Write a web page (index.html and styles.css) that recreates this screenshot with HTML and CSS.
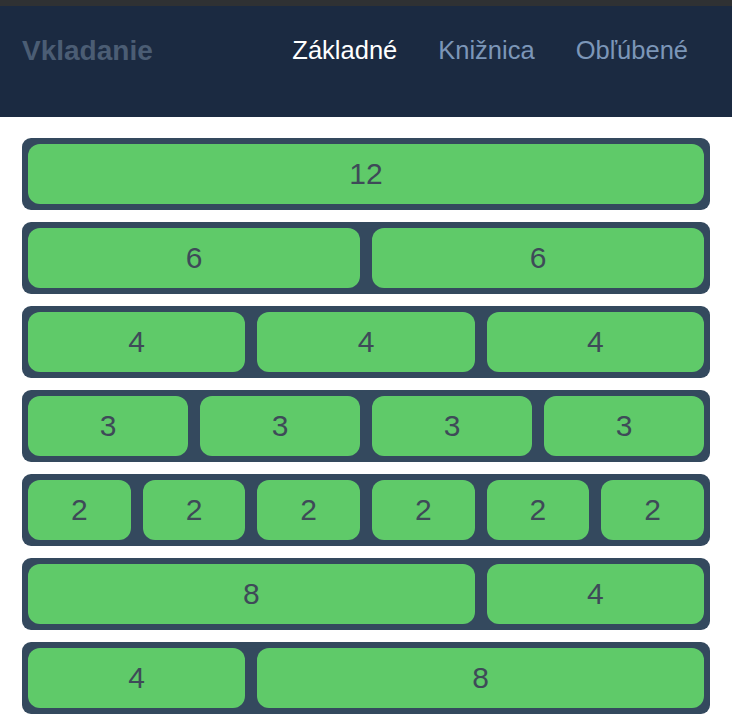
FILE: index.html
```html
<!DOCTYPE html>
<html lang="sk">
<head>
<meta charset="utf-8">
<title>Vkladanie</title>
<link rel="stylesheet" href="styles.css">
</head>
<body>
<div class="topstrip"></div>
<header class="navbar">
  <div class="brand">Vkladanie</div>
  <nav class="nav">
    <a class="nav-item active">Základné</a>
    <a class="nav-item">Knižnica</a>
    <a class="nav-item">Obľúbené</a>
  </nav>
</header>
<main class="content">
  <div class="row"><div class="col c12"><div class="cell">12</div></div></div>
  <div class="row"><div class="col c6"><div class="cell">6</div></div><div class="col c6"><div class="cell">6</div></div></div>
  <div class="row"><div class="col c4"><div class="cell">4</div></div><div class="col c4"><div class="cell">4</div></div><div class="col c4"><div class="cell">4</div></div></div>
  <div class="row"><div class="col c3"><div class="cell">3</div></div><div class="col c3"><div class="cell">3</div></div><div class="col c3"><div class="cell">3</div></div><div class="col c3"><div class="cell">3</div></div></div>
  <div class="row"><div class="col c2"><div class="cell">2</div></div><div class="col c2"><div class="cell">2</div></div><div class="col c2"><div class="cell">2</div></div><div class="col c2"><div class="cell">2</div></div><div class="col c2"><div class="cell">2</div></div><div class="col c2"><div class="cell">2</div></div></div>
  <div class="row"><div class="col c8"><div class="cell">8</div></div><div class="col c4"><div class="cell">4</div></div></div>
  <div class="row"><div class="col c4"><div class="cell">4</div></div><div class="col c8"><div class="cell">8</div></div></div>
</main>
</body>
</html>
```
FILE: styles.css
```css
* { box-sizing: border-box; }
html, body {
  margin: 0;
  padding: 0;
  background: #ffffff;
  font-family: "Liberation Sans", Arial, Helvetica, sans-serif;
}
.topstrip {
  height: 6px;
  background: #2f3133;
}
.navbar {
  height: 111px;
  background: #1b2a41;
  display: flex;
  align-items: flex-start;
  justify-content: space-between;
  padding: 0 44px 0 22px;
}
.brand {
  margin-top: 28px;
  font-size: 28px;
  font-weight: bold;
  color: #4b5d74;
  line-height: 34px;
}
.nav {
  display: flex;
  gap: 41px;
  margin-top: 28px;
}
.nav-item {
  font-size: 25.5px;
  line-height: 32px;
  color: #7c96b8;
  text-decoration: none;
}
.nav-item.active {
  color: #ffffff;
}
.content {
  padding: 21px 22px 0;
  display: flex;
  flex-direction: column;
  gap: 12px;
}
.row {
  display: flex;
  background: #34495e;
  border-radius: 9px;
  padding: 6px 0;
}
.col {
  padding: 0 6px;
}
.c12 { flex: 0 0 100%; }
.c8 { flex: 0 0 66.6667%; }
.c6 { flex: 0 0 50%; }
.c4 { flex: 0 0 33.3333%; }
.c3 { flex: 0 0 25%; }
.c2 { flex: 0 0 16.6667%; }
.cell {
  height: 60px;
  background: #5fca69;
  border-radius: 12px;
  display: flex;
  align-items: center;
  justify-content: center;
  font-size: 30px;
  color: #3e4a58;
}
```
